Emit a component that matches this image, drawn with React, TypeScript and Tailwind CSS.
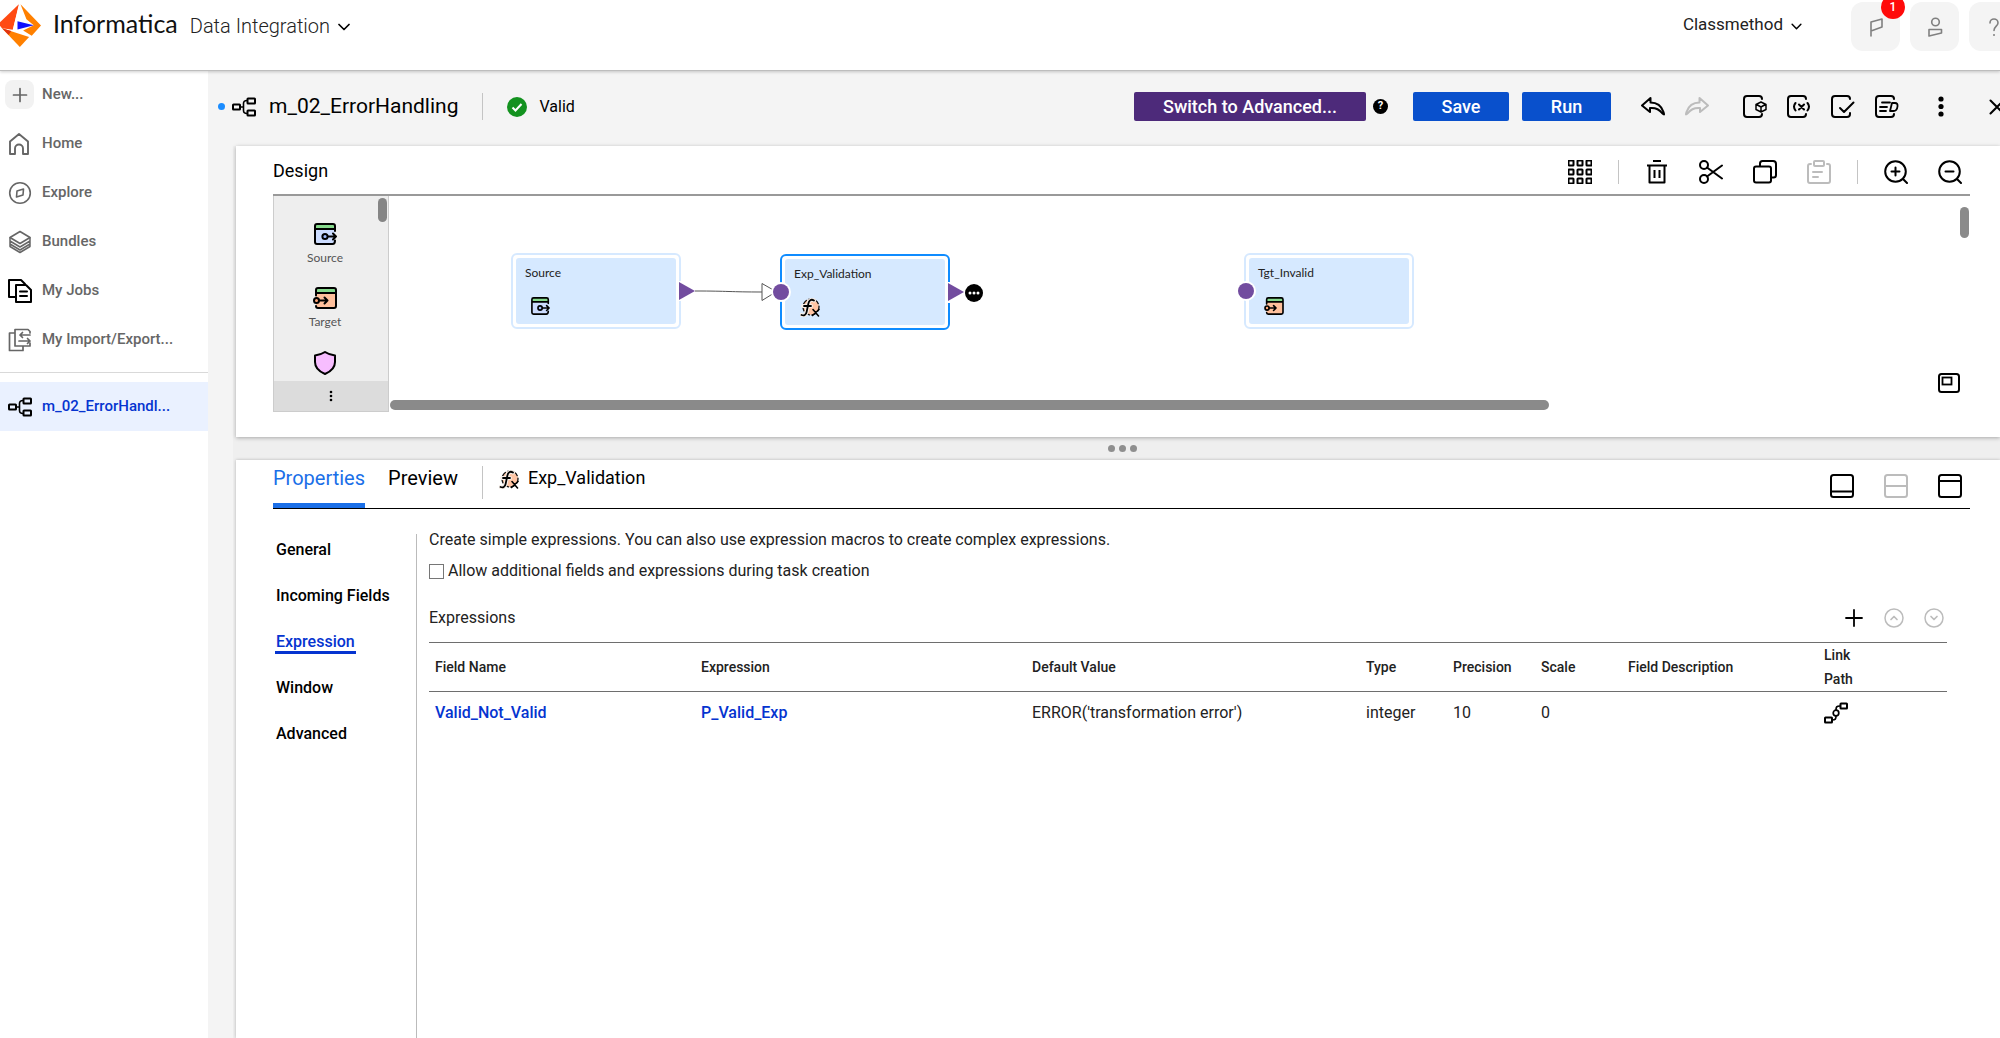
import React from "react";

type IconProps = { className?: string; children: React.ReactNode; box?: string };

function Icon({ className = "size-6", children, box = "0 0 24 24" }: IconProps) {
  return (
    <svg
      className={className}
      viewBox={box}
      fill="none"
      stroke="currentColor"
      strokeWidth="2"
      strokeLinecap="round"
      strokeLinejoin="round"
      aria-hidden="true"
    >
      {children}
    </svg>
  );
}

function MappingIcon({ className = "h-5 w-6" }: { className?: string }) {
  return (
    <Icon className={className} box="0 0 24 20">
      <rect x="1" y="7.5" width="7" height="5" rx="0.5" />
      <rect x="15.5" y="1.5" width="7.5" height="5" rx="0.5" />
      <rect x="15.5" y="13.5" width="7.5" height="5" rx="0.5" />
      <path d="M8 10h3.5M15 3.5c-3 0-3.5 1-3.5 3v7c0 2 .5 3 3.5 3" strokeWidth="1.6" />
    </Icon>
  );
}

function SourceIcon({ className }: { className?: string }) {
  return (
    <Icon className={className} box="0 0 23 22">
      <path d="M1 6h20v14H3q-2 0-2-2z" fill="#ccdcff" stroke="none" />
      <path d="M1 6V3q0-2 2-2h16q2 0 2 2v3z" fill="#86d98c" stroke="none" />
      <path d="M21 17.5q0 3.500-2.500 3.500H3q-2 0-2-2V3q0-2 2-2h16q2 0 2 2v5M1 6h20" />
      <circle cx="11" cy="13.500" r="2.600" fill="#9fbcff" />
      <path d="M14 13.500h8M19 10.500l3 3-3 3" />
    </Icon>
  );
}

function TargetIcon({ className }: { className?: string }) {
  return (
    <Icon className={className} box="0 0 24 22">
      <path d="M3 6h20v13q0 2-2 2H3z" fill="#ffc09c" stroke="none" />
      <path d="M3 6V3q0-2 2-2h16q2 0 2 2v3z" fill="#86d98c" stroke="none" />
      <path d="M3 8.500V3q0-2 2-2h16q2 0 2 2v16q0 2-2 2H5q-2 0-2-2M3 6h20" />
      <circle cx="3.500" cy="13.500" r="2.500" fill="#ffa576" />
      <path d="M6.500 13.500h8M11.500 10.500l3 3-3 3" />
    </Icon>
  );
}

function FxIcon({ className = "h-[19px] w-5" }: { className?: string }) {
  return (
    <Icon className={className} box="0 0 20 19">
      <circle cx="11" cy="9" r="8" fill="#ffc4a3" stroke="#111" strokeWidth="1.3" strokeDasharray="4.500 2.500" />
      <path d="M14 2.500c-3-1.800-5 0-5.600 3L6.600 14c-.6 3-2.600 4-5.100 3M3 8h8" stroke="#f7efe9" strokeWidth="4" />
      <path d="M14 2.500c-3-1.800-5 0-5.600 3L6.600 14c-.6 3-2.600 4-5.100 3M4 8h7" strokeWidth="1.800" />
      <path d="M13 11.500l5.500 6.500M19 11.500l-6.500 6" strokeWidth="1.600" />
    </Icon>
  );
}

function Chevron({ className }: { className?: string }) {
  return (
    <Icon className={className} box="0 0 12 8">
      <path d="M1 1.500l5 5 5-5" strokeWidth="1.700" />
    </Icon>
  );
}

function Divider({ className = "h-8" }: { className?: string }) {
  return <span className={`w-px shrink-0 bg-[#c4c4c4] ${className}`} />;
}

function IconButton({
  label,
  className = "",
  children,
}: {
  label: string;
  className?: string;
  children: React.ReactNode;
}) {
  return (
    <button type="button" aria-label={label} className={`flex shrink-0 items-center justify-center ${className}`}>
      {children}
    </button>
  );
}

function Header() {
  return (
    <header className="relative z-10 flex h-[71px] items-start overflow-hidden border-b border-[#bdbdbd] bg-white shadow-[0_1px_3px_rgba(0,0,0,0.2)]">
      <svg className="mt-1 h-[43px] w-[41px] shrink-0" viewBox="0 12 124 130" aria-hidden="true">
        <path d="M57 13L-5 72l11 13 33 5z" fill="#ff4a12" />
        <path d="M58 14L38 92l40 8 6-48z" fill="#fff" />
        <path d="M62 13l62 64-28 31-26-16 32-16-22-18z" fill="#ff8000" />
        <path d="M6 85l82 27-28 30z" fill="#ff8000" />
        <path d="M6 85l28 9-8 12z" fill="#e03410" />
        <path d="M53 64l49 12-49 13z" fill="#1010ff" />
      </svg>
      <div className="ml-3 flex h-12 items-center">
        <span className="font-[Lato] text-[25px] text-[#111]">Informatica</span>
        <button type="button" className="ml-3 flex items-center gap-2 pt-1 text-[20px] font-light text-[#222]">
          Data Integration
          <Chevron className="mt-0.5 h-2 w-3 text-black" />
        </button>
      </div>
      <div className="ml-auto flex shrink-0 items-start">
        <button type="button" className="mr-[49px] flex h-12 items-center gap-2 pt-0.5 text-[17px] text-[#222]">
          Classmethod
          <Chevron className="mt-0.5 h-[7px] w-[11px] text-black" />
        </button>
        <div className="-mr-[18px] mt-0.5 flex gap-[10px] text-[#808080]">
          <div className="relative">
            <IconButton label="Notifications" className="size-[49px] rounded-xl bg-[#f4f4f4]">
              <Icon className="h-5 w-4" box="0 0 16 20">
                <path d="M3 19V5l11-3v8L3 14" strokeWidth="1.600" />
              </Icon>
            </IconButton>
            <span className="absolute -top-[7px] left-[30px] flex size-6 items-center justify-center rounded-full bg-[#ff0a0a] text-[12px] font-medium text-white">
              1
            </span>
          </div>
          <IconButton label="Account" className="size-[49px] rounded-xl bg-[#f4f4f4]">
            <Icon className="h-5 w-4" box="0 0 16 20">
              <circle cx="8.500" cy="5" r="3.800" strokeWidth="1.600" />
              <path d="M2 12.500h12.500v3.500L2 19z" strokeWidth="1.600" />
            </Icon>
          </IconButton>
          <IconButton label="Help" className="size-[49px] rounded-xl bg-[#f4f4f4]">
            <Icon className="h-5 w-4" box="0 0 16 20">
              <path d="M4 6a4 4 0 118 0c0 3-4 3.500-4 7.500" strokeWidth="1.600" />
              <path d="M8 18v.1" />
            </Icon>
          </IconButton>
        </div>
      </div>
    </header>
  );
}

const navItems = [
  {
    label: "Home",
    icon: (
      <Icon className="size-6">
        <path d="M2 22V9.500L11 2l9 7.500V22h-5v-5.500a4 4 0 00-8 0V22z" strokeWidth="1.900" />
      </Icon>
    ),
  },
  {
    label: "Explore",
    icon: (
      <Icon className="size-6">
        <circle cx="12" cy="12" r="10.300" strokeWidth="1.600" />
        <path d="M9 10l6.500-2-.5 6-6.500 2z" strokeWidth="1.600" />
      </Icon>
    ),
  },
  {
    label: "Bundles",
    icon: (
      <Icon className="size-6">
        <path d="M12 1.500l10 6-10 6-10-6z" strokeWidth="1.700" />
        <path d="M2 11l10 6 10-6M2 14l10 6 10-6M2 8v8.500l10 6 10-6V8" strokeWidth="1.500" />
      </Icon>
    ),
  },
  {
    label: "My Jobs",
    icon: (
      <Icon className="size-6 text-black">
        <path d="M7 18H1V1h12l4 4M8 23V6h10l5 5v12z" />
        <path d="M12 12.500h7M12 17h7" />
      </Icon>
    ),
  },
  {
    label: "My Import/Export...",
    icon: (
      <Icon className="size-6">
        <path d="M22 5V3.500L20 1.500H7V18h15V15M7 5H1.500v17.500H15V18" strokeWidth="1.700" />
        <path d="M22 7H12M14.500 4.500L12 7l2.500 2.500M11 13h11M19.500 10.500L22 13l-2.500 2.500" strokeWidth="1.700" />
      </Icon>
    ),
  },
];

function Sidebar() {
  return (
    <nav className="w-[208px] shrink-0 bg-white text-[15px] font-medium text-[#666]">
      <ul className="border-b border-[#d9d9d9] pb-2">
        <li className="pb-px">
          <button type="button" className="flex h-[47px] w-full items-center pl-[5px]">
            <span className="flex size-[29px] items-center justify-center rounded-lg bg-[#f2f2f2]">
              <Icon className="size-4" box="0 0 16 16">
                <path d="M8 1.500v13M1.500 8h13" strokeWidth="1.700" />
              </Icon>
            </span>
            <span className="ml-2">New...</span>
          </button>
        </li>
        {navItems.map((item) => (
          <li key={item.label}>
            <a href="#" className="flex h-[49px] items-center gap-[10px] pl-2">
              {item.icon}
              {item.label}
            </a>
          </li>
        ))}
      </ul>
      <a href="#" className="mt-[9px] flex h-[49px] items-center gap-[10px] bg-[#eaf1ff] pl-2 text-[#0534d0]">
        <MappingIcon className="h-5 w-6 text-black" />
        m_02_ErrorHandl...
      </a>
    </nav>
  );
}

function Toolbar() {
  return (
    <div className="mb-1 flex h-[71px] items-center overflow-hidden pl-[10px]">
      <span className="size-[7px] shrink-0 rounded-full bg-[#1a8cff]" />
      <MappingIcon className="ml-[7px] h-5 w-6 shrink-0" />
      <h1 className="ml-[13px] text-[21px]">m_02_ErrorHandling</h1>
      <Divider className="ml-6 h-[27px]" />
      <svg className="ml-[24px] size-5 shrink-0" viewBox="0 0 20 20" aria-hidden="true">
        <circle cx="10" cy="10" r="10" fill="#13921f" />
        <path d="M5.500 10.500l3 3 6-6.500" stroke="#fff" strokeWidth="2" fill="none" />
      </svg>
      <span className="ml-3 text-[16px]">Valid</span>
      <div className="ml-auto flex shrink-0 items-center">
        <button type="button" className="h-[29px] w-[232px] rounded-[2px] bg-[#4d2a7a] text-[18px] font-medium text-white">
          Switch to Advanced...
        </button>
        <button
          type="button"
          aria-label="About advanced mode"
          className="ml-[7px] flex size-[15px] items-center justify-center rounded-full bg-black text-[11px] font-bold text-white"
        >
          ?
        </button>
        <Divider className="ml-3" />
        <button type="button" className="ml-3 h-[29px] w-[96px] rounded-[2px] bg-[#0950cc] text-[18px] font-medium text-white">
          Save
        </button>
        <button type="button" className="ml-[13px] h-[29px] w-[89px] rounded-[2px] bg-[#0950cc] text-[18px] font-medium text-white">
          Run
        </button>
        <Divider className="ml-[13px]" />
        <IconButton label="Undo" className="ml-4">
          <Icon>
            <path d="M9.500 3L1 10.500 9 17v-4c5-.5 9 1 12 5 3 3 2 1 1.500-1C20.500 11 16 7.500 9.500 7.500z" />
          </Icon>
        </IconButton>
        <IconButton label="Redo" className="ml-5 text-[#bcbcbc]">
          <Icon>
            <path d="M14.500 3L23 10.500 15 17v-4c-5-.5-9 1-12 5-3 3-2 1-1.500-1C3.500 11 8 7.500 14.500 7.500z" />
          </Icon>
        </IconButton>
        <Divider className="ml-[16px]" />
        <div className="ml-[17px] flex gap-5">
          <IconButton label="Runtime package">
            <Icon>
              <path d="M19 19q0 3-3 3H4q-3 0-3-3V4q0-3 3-3h12q3 0 3 3" />
              <path d="M18 7l5 2.500v5L18 17l-5-2.500v-5zM13.500 9.500l4.500 2.500 4.500-2.500M18 12v5" strokeWidth="1.500" />
            </Icon>
          </IconButton>
          <IconButton label="Parameters">
            <Icon>
              <path d="M19 19q0 3-3 3H4q-3 0-3-3V4q0-3 3-3h12q3 0 3 3" />
              <path d="M8.500 8q-3 3.500 0 7.500M20.500 8q3 3.500 0 7.500M12 9.500l5 5M17 9.500l-5 5" />
            </Icon>
          </IconButton>
          <IconButton label="Validation">
            <Icon>
              <path d="M19 18v1q0 3-3 3H4q-3 0-3-3V4q0-3 3-3h12q3 0 3 3M9 13l4 4L22.500 7.500" />
            </Icon>
          </IconButton>
          <IconButton label="Description">
            <Icon>
              <path d="M19 19q0 3-3 3H4q-3 0-3-3V4q0-3 3-3h12q3 0 3 3" />
              <path d="M7 7.500h8M5 12h7M5 16h6M17 8h3q3 0 2.500 3.500-.5 4.500-4 4.500H15z" strokeWidth="1.800" />
            </Icon>
          </IconButton>
        </div>
        <Divider className="ml-4" />
        <IconButton label="More actions" className="ml-[22px]">
          <svg className="h-[21px] w-[6px]" viewBox="0 0 6 21" aria-hidden="true">
            <circle cx="3" cy="3" r="2.600" />
            <circle cx="3" cy="10.500" r="2.600" />
            <circle cx="3" cy="18" r="2.600" />
          </svg>
        </IconButton>
        <Divider className="ml-6" />
        <IconButton label="Close" className="-mr-[5px] ml-[20px]">
          <Icon className="size-4" box="0 0 16 16">
            <path d="M1.500 1.500l13 13M14.500 1.500l-13 13" />
          </Icon>
        </IconButton>
      </div>
    </div>
  );
}

const gridCells = [0, 9, 18];

function DesignActions() {
  return (
    <div className="ml-auto flex items-center pr-2">
      <IconButton label="Arrange">
        <Icon>
          {gridCells.map((y) =>
            gridCells.map((x) => <rect key={`${x}-${y}`} x={x + 0.5} y={y + 0.5} width="5" height="5" rx="0.500" />)
          )}
        </Icon>
      </IconButton>
      <Divider className="ml-[26px] h-6" />
      <IconButton label="Delete" className="ml-[26px]">
        <Icon>
          <path d="M8 1h8M2 5.500h20M4.500 5.500V22.500h15V5.500M9.500 10v8M14.500 10v8" strokeLinecap="butt" />
        </Icon>
      </IconButton>
      <IconButton label="Cut" className="ml-[30px]">
        <Icon>
          <circle cx="5" cy="5" r="4" />
          <circle cx="5" cy="19" r="4" />
          <path d="M8 7.500L23 18.500M8 16.500L23 5.500" />
        </Icon>
      </IconButton>
      <IconButton label="Copy" className="ml-[30px]">
        <Icon>
          <rect x="1" y="6.500" width="17" height="16" rx="2" />
          <path d="M7 6V3.500q0-2.500 2.500-2.500H20q3 0 3 3v11q0 2.500-2.500 2.500H18.500" />
        </Icon>
      </IconButton>
      <IconButton label="Paste" className="ml-[30px] text-[#bcbcbc]">
        <Icon>
          <rect x="7" y="1" width="10" height="5" rx="1" />
          <path d="M4 4H3Q1 4 1 6v15q0 2 2 2h18q2 0 2-2V6q0-2-2-2h-1M6 12h9M6 17h5" />
        </Icon>
      </IconButton>
      <Divider className="ml-[26px] h-6" />
      <IconButton label="Zoom in" className="ml-[26px]">
        <Icon>
          <circle cx="11.500" cy="11.500" r="10.300" />
          <path d="M19 19l4 4M7.500 11.500h8M11.500 7.500v8" />
        </Icon>
      </IconButton>
      <IconButton label="Zoom out" className="ml-[30px]">
        <Icon>
          <circle cx="11.500" cy="11.500" r="10.300" />
          <path d="M19 19l4 4M7.500 11.500h8" />
        </Icon>
      </IconButton>
    </div>
  );
}

function Palette() {
  return (
    <div className="relative flex w-[116px] shrink-0 flex-col overflow-hidden border border-t-0 border-[#ccc] bg-[#eee]">
      <ul className="flex flex-col items-center pr-3 pt-[27px] font-[Lato] text-[12px] leading-4 text-[#555]">
        <li className="flex h-16 flex-col items-center">
          <SourceIcon className="h-[22px] w-[23px] text-black" />
          <span className="mt-[5px]">Source</span>
        </li>
        <li className="flex h-16 flex-col items-center">
          <TargetIcon className="h-[22px] w-6 text-black" />
          <span className="mt-[5px]">Target</span>
        </li>
        <li className="flex h-[30px] items-start">
          <Icon className="h-6 w-[22px] text-black" box="0 0 22 24">
            <path d="M11 1c3 2 6 3 10 3.500V11c0 6-4 9.500-10 12C5 20.500 1 17 1 11V4.500C5 4 8 3 11 1z" fill="#f7bdff" />
          </Icon>
        </li>
      </ul>
      <span className="absolute right-px top-[2px] h-6 w-[9px] rounded-full bg-[#858585]" />
      <button type="button" aria-label="More transformations" className="flex h-[30px] w-full items-center justify-center bg-[#dcdcdc]">
        <svg className="h-3 w-1" viewBox="0 0 4 12" aria-hidden="true">
          <circle cx="2" cy="2" r="1.300" />
          <circle cx="2" cy="6" r="1.300" />
          <circle cx="2" cy="10" r="1.300" />
        </svg>
      </button>
    </div>
  );
}

function Node({
  name,
  place,
  border,
  children,
}: {
  name: string;
  place: string;
  border: string;
  children: React.ReactNode;
}) {
  return (
    <div className={`absolute h-[76px] w-[170px] rounded-md border-2 bg-white p-[3px] ${border} ${place}`}>
      <div className="h-full rounded-[3px] bg-[#d6e9ff] px-[9px] pt-[7px] font-[Lato] text-[12px] leading-4 text-[#222]">
        {name}
        <div className="ml-[6px] mt-4 text-black">{children}</div>
      </div>
    </div>
  );
}

function Canvas() {
  return (
    <div className="relative h-[215px] grow">
      <Node name="Source" place="left-[122px] top-[57px]" border="border-[#d6e9ff]">
        <SourceIcon className="h-[18px] w-[19px]" />
      </Node>
      <Node name="Exp_Validation" place="left-[391px] top-[58px]" border="border-[#0f8cff]">
        <FxIcon />
      </Node>
      <Node name="Tgt_Invalid" place="left-[855px] top-[57px]" border="border-[#d6e9ff]">
        <TargetIcon className="h-[18px] w-5" />
      </Node>
      <svg className="absolute left-[280px] top-[75px] h-10 w-[600px]" viewBox="0 0 600 40" aria-hidden="true">
        <path d="M11 10v20M280 11v21" stroke="#fff" strokeWidth="4" />
        <path d="M10 11v18l16-9z" fill="#724c9f" />
        <path d="M26 20c34 0 34 1 68 1" stroke="#555" fill="none" />
        <path d="M93 12.500v17L103.500 23V18.500z" fill="#fff" stroke="#555" />
        <circle cx="112" cy="21" r="10" fill="#fff" />
        <circle cx="112" cy="21" r="8" fill="#724c9f" />
        <path d="M279 12v18l16-9z" fill="#724c9f" />
        <circle cx="305" cy="22" r="9" fill="#000" />
        <circle cx="301" cy="22" r="1.500" fill="#fff" />
        <circle cx="305" cy="22" r="1.500" fill="#fff" />
        <circle cx="309" cy="22" r="1.500" fill="#fff" />
        <circle cx="577" cy="20" r="10" fill="#fff" />
        <circle cx="577" cy="20" r="8" fill="#724c9f" />
      </svg>
      <span className="absolute right-px top-[11px] h-[31px] w-[9px] rounded-full bg-[#8a8a8a]" />
      <span className="absolute bottom-px left-px h-[10px] w-[1159px] rounded-full bg-[#8a8a8a]" />
      <IconButton label="Overview" className="absolute bottom-[18px] right-[10px]">
        <Icon className="h-5 w-[22px]" box="0 0 22 20">
          <rect x="1" y="1" width="20" height="18" rx="2.500" />
          <rect x="4.500" y="4.500" width="9" height="7" strokeWidth="1.800" strokeLinejoin="miter" />
        </Icon>
      </IconButton>
    </div>
  );
}

const sections = ["General", "Incoming Fields", "Expression", "Window", "Advanced"];

const columns = [
  { label: "Field Name", width: "w-[266px]" },
  { label: "Expression", width: "w-[331px]" },
  { label: "Default Value", width: "w-[334px]" },
  { label: "Type", width: "w-[87px]" },
  { label: "Precision", width: "w-[88px]" },
  { label: "Scale", width: "w-[87px]" },
  { label: "Field Description", width: "w-[196px]" },
  { label: "Link Path", width: "w-[129px]" },
];

function ExpressionTable() {
  return (
    <table className="w-full table-fixed border-collapse text-left">
      <thead>
        <tr className="h-[49px] border-y border-[#6e6e6e] text-[14px] leading-6">
          {columns.map((column) => (
            <th key={column.label} scope="col" className={`px-[6px] py-0 font-medium ${column.width}`}>
              <span className={column.label === "Link Path" ? "block w-10" : ""}>{column.label}</span>
            </th>
          ))}
        </tr>
      </thead>
      <tbody>
        <tr className="h-[43px] text-[16px] text-[#222]">
          <td className="px-[6px]">
            <a href="#" className="font-medium text-[#0534d0]">Valid_Not_Valid</a>
          </td>
          <td className="px-[6px]">
            <a href="#" className="font-medium text-[#0534d0]">P_Valid_Exp</a>
          </td>
          <td className="px-[6px]">ERROR('transformation error')</td>
          <td className="px-[6px]">integer</td>
          <td className="px-[6px]">10</td>
          <td className="px-[6px]">0</td>
          <td className="px-[6px]" />
          <td className="px-[6px]">
            <IconButton label="Show link path" className="text-black">
              <Icon className="h-[22px] w-6" box="0 0 24 22">
                <rect x="1" y="15.500" width="7" height="5" rx="0.500" />
                <rect x="16.500" y="1.500" width="6.500" height="5" rx="0.500" />
                <circle cx="12" cy="11" r="2.800" strokeWidth="1.700" />
                <path d="M8 18c3.500 0 4-1 4-4M12 8c0-3 .5-4 4-4" strokeWidth="1.700" />
              </Icon>
            </IconButton>
          </td>
        </tr>
      </tbody>
    </table>
  );
}

function PropertiesPanel() {
  return (
    <section className="flex grow flex-col bg-white pl-[37px] pr-[30px] shadow-[0_0_3px_rgba(0,0,0,0.25)]">
      <div className="flex h-[49px] shrink-0 items-stretch border-b border-black text-[20px] leading-7">
        <button type="button" className="flex h-[48px] items-start border-b-[5px] border-[#1a6fe8] pt-1 text-[#1a6fe8]">
          Properties
        </button>
        <button type="button" className="ml-[23px] flex items-start pt-1">Preview</button>
        <Divider className="ml-[24px] mt-[6px] h-[33px]" />
        <div className="ml-4 flex items-start gap-[9px]">
          <FxIcon className="mt-[10px] h-[19px] w-5" />
          <span className="pt-1 text-[18px]">Exp_Validation</span>
        </div>
        <div className="ml-auto flex items-center gap-[30px] pr-2 pt-[3px]">
          <IconButton label="Minimize panel">
            <Icon>
              <rect x="1" y="1" width="22" height="22" rx="2.500" />
              <path d="M1 17.500h22" />
            </Icon>
          </IconButton>
          <IconButton label="Split panel" className="text-[#bcbcbc]">
            <Icon>
              <rect x="1" y="1" width="22" height="22" rx="2.500" />
              <path d="M1 12h22" />
            </Icon>
          </IconButton>
          <IconButton label="Maximize panel">
            <Icon>
              <rect x="1" y="1" width="22" height="22" rx="2.500" />
              <path d="M1 7h22" />
            </Icon>
          </IconButton>
        </div>
      </div>
      <div className="mt-[25px] flex grow">
        <ul className="flex w-[143px] shrink-0 flex-col gap-[22px] pl-[2px] pt-1 text-[16px] font-medium">
          {sections.map((name) => (
            <li key={name}>
              <a
                href="#"
                className={
                  name === "Expression"
                    ? "inline-block h-6 border-b-[3px] border-[#0534d0] px-px leading-6 text-[#0534d0]"
                    : "inline-block h-6 px-px leading-6"
                }
              >
                {name}
              </a>
            </li>
          ))}
        </ul>
        <div className="grow border-l border-[#bbb] pl-[12px] pr-6 text-[16px] text-[#222]">
          <p className="-mt-1.5 leading-6">
            Create simple expressions. You can also use expression macros to create complex expressions.
          </p>
          <label className="mt-[7px] flex h-6 items-center gap-1">
            <input type="checkbox" className="size-[15px] appearance-none border border-[#767676] bg-white" />
            Allow additional fields and expressions during task creation
          </label>
          <div className="mt-[22px] flex h-[26px] items-center">
            <h2>Expressions</h2>
            <div className="ml-auto flex items-center gap-5 pr-[3px] text-[#bcbcbc]">
              <IconButton label="Add expression" className="text-black">
                <Icon className="size-5" box="0 0 20 20">
                  <path d="M10 2v16M2 10h16" strokeWidth="1.800" />
                </Icon>
              </IconButton>
              <IconButton label="Move up">
                <Icon className="size-5" box="0 0 20 20">
                  <circle cx="10" cy="10" r="9" strokeWidth="1.500" />
                  <path d="M7 11.500l3-3 3 3" strokeWidth="1.700" />
                </Icon>
              </IconButton>
              <IconButton label="Move down">
                <Icon className="size-5" box="0 0 20 20">
                  <circle cx="10" cy="10" r="9" strokeWidth="1.500" />
                  <path d="M7 8.500l3 3 3-3" strokeWidth="1.700" />
                </Icon>
              </IconButton>
            </div>
          </div>
          <div className="mt-[11px]">
            <ExpressionTable />
          </div>
        </div>
      </div>
    </section>
  );
}

export default function App() {
  return (
    <div className="flex min-h-screen flex-col overflow-hidden bg-white font-[Roboto,sans-serif] text-black">
      <Header />
      <div className="flex grow">
        <Sidebar />
        <main className="flex min-w-0 grow flex-col bg-[#f4f4f4]">
          <Toolbar />
          <div className="ml-[25px] flex grow flex-col bg-[#efefef] pl-[3px]">
            <section className="bg-white pb-[25px] pl-[37px] pr-[30px] shadow-[0_1px_4px_rgba(0,0,0,0.3)]">
              <div className="flex h-[50px] items-center border-b-2 border-[#999]">
                <h2 className="text-[18px]">Design</h2>
                <div className="ml-auto pt-1">
                  <DesignActions />
                </div>
              </div>
              <div className="flex">
                <Palette />
                <Canvas />
              </div>
            </section>
            <div className="flex h-[23px] shrink-0 items-center justify-center gap-1 pl-2">
              <span className="size-[7px] rounded-full bg-[#8f8f8f]" />
              <span className="size-[7px] rounded-full bg-[#8f8f8f]" />
              <span className="size-[7px] rounded-full bg-[#8f8f8f]" />
            </div>
            <PropertiesPanel />
          </div>
        </main>
      </div>
    </div>
  );
}
